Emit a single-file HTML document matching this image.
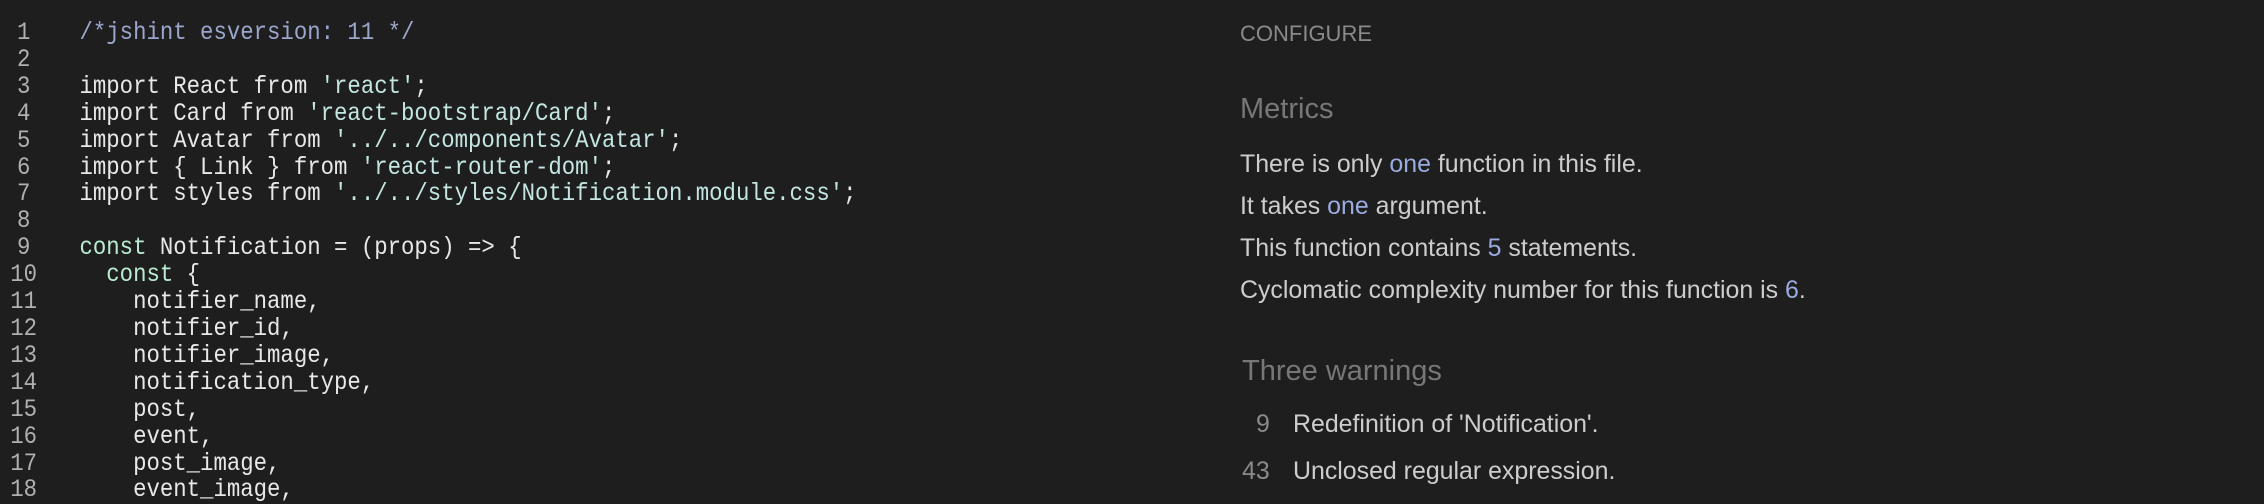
<!DOCTYPE html>
<html><head><meta charset="utf-8"><style>
html,body{margin:0;padding:0;background:#1e1e1e;width:2264px;height:492px;overflow:hidden}
.code{position:absolute;left:0;top:20px;font-family:"Liberation Mono",monospace;font-size:25px;line-height:26.9px;color:#e8e8e8;white-space:pre;transform:scaleX(0.893);transform-origin:0 0}
.ln{display:inline-block;width:45px;text-align:center;color:#b0b0b0;margin-left:4px;margin-right:40px}
.c{color:#9aa6cc}.s{color:#c3e6e2}.k{color:#b9ecd0}
.r{position:absolute;font-family:"Liberation Sans",sans-serif;white-space:nowrap}
.b{color:#9aabdf}
</style></head><body>
<div class="code"><div><span class="ln">1</span><span class="c">/*jshint esversion: 11 */</span></div><div><span class="ln">2</span></div><div><span class="ln">3</span>import React from <span class="s">'react'</span>;</div><div><span class="ln">4</span>import Card from <span class="s">'react-bootstrap/Card'</span>;</div><div><span class="ln">5</span>import Avatar from <span class="s">'../../components/Avatar'</span>;</div><div><span class="ln">6</span>import { Link } from <span class="s">'react-router-dom'</span>;</div><div><span class="ln">7</span>import styles from <span class="s">'../../styles/Notification.module.css'</span>;</div><div><span class="ln">8</span></div><div><span class="ln">9</span><span class="k">const</span> Notification = (props) =&gt; {</div><div><span class="ln">10</span>  <span class="k">const</span> {</div><div><span class="ln">11</span>    notifier_name,</div><div><span class="ln">12</span>    notifier_id,</div><div><span class="ln">13</span>    notifier_image,</div><div><span class="ln">14</span>    notification_type,</div><div><span class="ln">15</span>    post,</div><div><span class="ln">16</span>    event,</div><div><span class="ln">17</span>    post_image,</div><div><span class="ln">18</span>    event_image,</div></div>
<div class="r" style="left:1240px;top:21px;font-size:22px;color:#8a8a8a">CONFIGURE</div>
<div class="r" style="left:1240px;top:93px;font-size:29px;color:#777">Metrics</div>
<div class="r" style="left:1240px;top:150px;font-size:24.9px;color:#cdcdcd">There is only <span class="b">one</span> function in this file.</div>
<div class="r" style="left:1240px;top:192px;font-size:24.9px;color:#cdcdcd">It takes <span class="b">one</span> argument.</div>
<div class="r" style="left:1240px;top:234px;font-size:24.9px;color:#cdcdcd">This function contains <span class="b">5</span> statements.</div>
<div class="r" style="left:1240px;top:276px;font-size:24.9px;color:#cdcdcd">Cyclomatic complexity number for this function is <span class="b">6</span>.</div>
<div class="r" style="left:1242px;top:355px;font-size:29px;color:#777">Three warnings</div>
<div class="r" style="left:1256px;top:410px;font-size:24.9px;color:#8a8a8a">9</div>
<div class="r" style="left:1293px;top:410px;font-size:24.9px;color:#cdcdcd">Redefinition of 'Notification'.</div>
<div class="r" style="left:1242px;top:457px;font-size:24.9px;color:#8a8a8a">43</div>
<div class="r" style="left:1293px;top:457px;font-size:24.9px;color:#cdcdcd">Unclosed regular expression.</div>
</body></html>
